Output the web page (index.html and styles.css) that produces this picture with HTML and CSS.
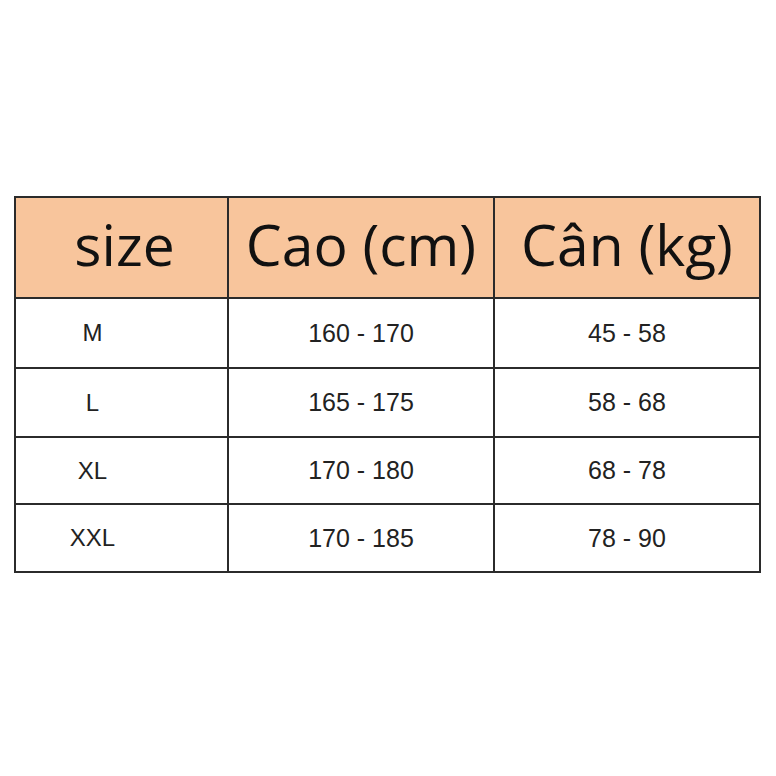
FILE: index.html
```html
<!DOCTYPE html>
<html lang="vi">
<head>
<meta charset="utf-8">
<title>Bảng size</title>
<link rel="stylesheet" href="styles.css">
</head>
<body>
<div class="page">
  <table class="sizes">
    <colgroup>
      <col class="c1"><col class="c2"><col class="c3">
    </colgroup>
    <thead>
      <tr class="head">
        <th class="h1">size</th>
        <th>Cao (cm)</th>
        <th>Cân (kg)</th>
      </tr>
    </thead>
    <tbody>
      <tr class="r1"><td class="sz">M</td><td>160 - 170</td><td>45 - 58</td></tr>
      <tr class="r2"><td class="sz">L</td><td>165 - 175</td><td>58 - 68</td></tr>
      <tr class="r3"><td class="sz">XL</td><td>170 - 180</td><td>68 - 78</td></tr>
      <tr class="r4"><td class="sz">XXL</td><td>170 - 185</td><td>78 - 90</td></tr>
    </tbody>
  </table>
</div>
</body>
</html>
```

FILE: styles.css
```css
html, body {
  margin: 0;
  padding: 0;
  background: #ffffff;
}
.page {
  padding: 196px 0 0 14px;
}
.sizes {
  border-collapse: collapse;
  table-layout: fixed;
  width: 745px;
}
.c1 { width: 213px; }
.c2 { width: 266px; }
.c3 { width: 266px; }
.sizes th,
.sizes td {
  border: 2px solid #2b2b2b;
  text-align: center;
  vertical-align: middle;
  padding: 0;
}
.head th {
  height: 93px;
  background: #f8c59c;
  font-family: "Open Sans", "Noto Sans", sans-serif;
  font-weight: 400;
  font-size: 57px;
  color: #111111;
  line-height: 1;
  padding-bottom: 6px;
}
.head .h1 {
  padding-left: 6px;
}
.sizes td {
  font-family: "Liberation Sans", Arial, sans-serif;
  font-size: 25px;
  color: #222222;
}
.sizes td.sz {
  font-size: 24px;
  padding-right: 58px;
}
.r1 td { height: 68px; }
.r2 td { height: 67px; }
.r3 td { height: 65px; }
.r4 td { height: 66px; }
```
